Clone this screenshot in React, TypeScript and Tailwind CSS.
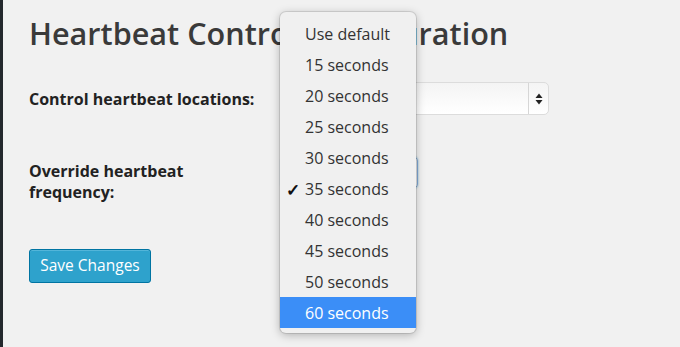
import { ReactElement } from "react";

const OPTIONS = [
  "Use default",
  "15 seconds",
  "20 seconds",
  "25 seconds",
  "30 seconds",
  "35 seconds",
  "40 seconds",
  "45 seconds",
  "50 seconds",
  "60 seconds",
];

const CHECKED = "35 seconds";
const HOVERED = "60 seconds";

function SelectArrows(): ReactElement {
  return (
    <svg width="8" height="12" viewBox="0 0 8 12">
      <path d="M4 0.5 L7.5 5 L0.5 5 Z" fill="#222" />
      <path d="M4 11.5 L7.5 7 L0.5 7 Z" fill="#222" />
    </svg>
  );
}

function FakeSelect({
  focused = false,
  width,
}: {
  focused?: boolean;
  width: string;
}): ReactElement {
  return (
    <div
      className={
        "flex h-[33px] items-stretch rounded-[5px] border bg-gradient-to-b from-[#f4f4f4] to-[#ffffff] " +
        width +
        " " +
        (focused
          ? "border-[#7ea6d4] shadow-[0_0_2px_rgba(30,140,190,0.6)]"
          : "border-[#dcdcdc]")
      }
    >
      <div className="flex-1" />
      <div className="flex w-[20px] items-center justify-center border-l border-[#d6d6d6]">
        <SelectArrows />
      </div>
    </div>
  );
}

function DropdownMenu(): ReactElement {
  return (
    <div className="absolute left-[280px] top-[12px] w-[136px] rounded-[6px] bg-[#f0f0f0] pt-[6px] pb-[5px] shadow-[0_2px_10px_rgba(0,0,0,0.28)] ring-1 ring-black/10">
      {OPTIONS.map((opt) => (
        <div
          key={opt}
          className={
            "relative flex h-[31px] items-center pl-[25px] text-[16px] " +
            (opt === HOVERED ? "bg-[#3b8ef7] text-white" : "text-[#333]")
          }
        >
          {opt === CHECKED && (
            <span className="absolute left-[6px] top-[4px] text-[17px] font-bold text-[#111]">
              ✓
            </span>
          )}
          {opt}
        </div>
      ))}
    </div>
  );
}

export default function App(): ReactElement {
  return (
    <div
      className="relative flex h-[347px] w-[680px] overflow-hidden bg-[#f1f1f1] text-[#222]"
      style={{ fontFamily: '"Open Sans", "Noto Sans", sans-serif' }}
    >
      <div className="w-[3px] shrink-0 bg-[#23282d]" />
      <div className="flex flex-col pl-[26px] pt-[11px]">
        <h1 className="text-[30.6px] font-semibold leading-[44px] text-[#3a3a3a]">
          Heartbeat Control Configuration
        </h1>

        <div className="mt-[27px] flex items-center">
          <label className="w-[252px] text-[16px] font-bold">
            Control heartbeat locations:
          </label>
          <FakeSelect width="w-[268px]" />
        </div>

        <div className="mt-[45px] flex items-start">
          <label className="w-[252px] pt-[1px] text-[16px] font-bold leading-[21px]">
            Override heartbeat
            <br />
            frequency:
          </label>
          <div className="-mt-[4px]">
            <FakeSelect focused width="w-[137px]" />
          </div>
        </div>

        <div className="mt-[46px]">
          <button className="h-[34px] w-[122px] rounded-[3px] border border-[#0074a2] bg-[#2ea2cc] text-[15.5px] text-white shadow-[inset_0_1px_0_rgba(120,200,230,0.5)]">
            Save Changes
          </button>
        </div>
      </div>

      <DropdownMenu />
    </div>
  );
}
